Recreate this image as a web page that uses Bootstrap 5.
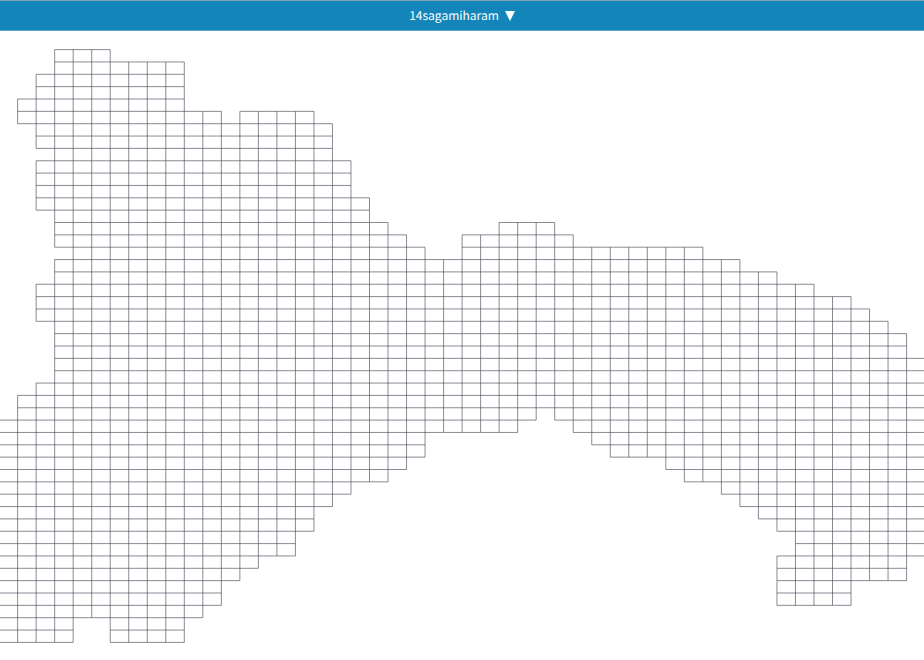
<!DOCTYPE html>
<html lang="ja">
<head>
<meta charset="utf-8">
<meta name="viewport" content="width=device-width, initial-scale=1">
<title>14sagamiharam</title>
<link href="https://cdn.jsdelivr.net/npm/bootstrap@5.3.0/dist/css/bootstrap.min.css" rel="stylesheet">
<style>
  body { font-family: "Noto Sans CJK JP", "Noto Sans", sans-serif; }
  .title-bar { background: #1385b8; border-top: 1px solid #7fa3b5; border-bottom: 1px solid #5ba6cc; }
  .area-picker { font-size: 12px; line-height: 29px; padding: 0; gap: 6px; text-rendering: geometricPrecision; }
  .mesh-map { min-height: 0; }
  .mesh-lines { fill: none; stroke: #2c2c40; stroke-width: 0.8; stroke-opacity: 0.7; }
</style>
</head>
<body class="d-flex flex-column vh-100 overflow-hidden bg-white">
<header class="title-bar d-flex justify-content-center">
  <button type="button" class="area-picker btn btn-link border-0 rounded-0 text-white text-decoration-none d-flex align-items-center">
    <span>14sagamiharam</span>
    <svg width="10" height="10" viewBox="0 0 10 10" aria-hidden="true"><path d="M0 0H10L5 10Z" fill="#fff"/></svg>
  </button>
</header>
<main class="mesh-map flex-fill">
  <svg class="w-100 h-100 d-block" viewBox="0 0 924 629" preserveAspectRatio="xMidYMin slice" role="img" aria-label="Mesh map">
    <path class="mesh-lines" id="mesh"/>
  </svg>
</main>
<script src="https://cdn.jsdelivr.net/npm/bootstrap@5.3.0/dist/js/bootstrap.bundle.min.js"></script>
<script>
  // Each row lists its runs of cells as [first column, end column].
  const E = 51;
  const rows = [
    [[3,6]], [[3,10]], [[2,10]], [[2,10]], [[1,10]], [[1,12],[13,17]],
    [[2,18]], [[2,18]], [[3,18]], [[2,19]], [[2,19]], [[2,19]],
    [[2,20]], [[3,20]], [[3,21],[27,30]], [[3,22],[25,31]], [[4,23],[25,38]],
    [[3,40]], [[3,42]], [[2,44]], [[2,46]], [[2,47]], [[3,48]], [[3,49]], [[3,49]],
    [[3,E]], [[3,E]], [[2,E]], [[1,E]], [[1,29],[30,E]],
    [[-1,28],[31,E]], [[-1,23],[32,E]], [[-1,23],[33,E]], [[-1,22],[36,E]],
    [[-1,21],[37,E]], [[-1,19],[39,E]], [[-1,18],[40,E]], [[-1,17],[41,E]],
    [[-1,17],[42,E]], [[-1,16],[43,E]], [[-1,16],[43,E]], [[-1,14],[42,49]],
    [[-1,13],[42,49]], [[-1,12],[42,46]], [[-1,12],[42,46]], [[-1,11]],
    [[-1,4],[6,10]], [[-1,4],[6,10]]
  ];
  const cell = { w: 18.52, h: 12.35 }, origin = { x: -0.9, y: 18.6 };
  const px = c => (origin.x + c * cell.w).toFixed(2);
  const py = r => (origin.y + r * cell.h).toFixed(2);
  const edges = new Set();
  rows.forEach((runs, r) => runs.forEach(([a, b]) => {
    for (let c = a; c < b; c++) {
      edges.add(`M${px(c)} ${py(r)}H${px(c + 1)}`);
      edges.add(`M${px(c)} ${py(r + 1)}H${px(c + 1)}`);
      edges.add(`M${px(c)} ${py(r)}V${py(r + 1)}`);
      edges.add(`M${px(c + 1)} ${py(r)}V${py(r + 1)}`);
    }
  }));
  document.getElementById('mesh').setAttribute('d', [...edges].join(''));
</script>
</body>
</html>
